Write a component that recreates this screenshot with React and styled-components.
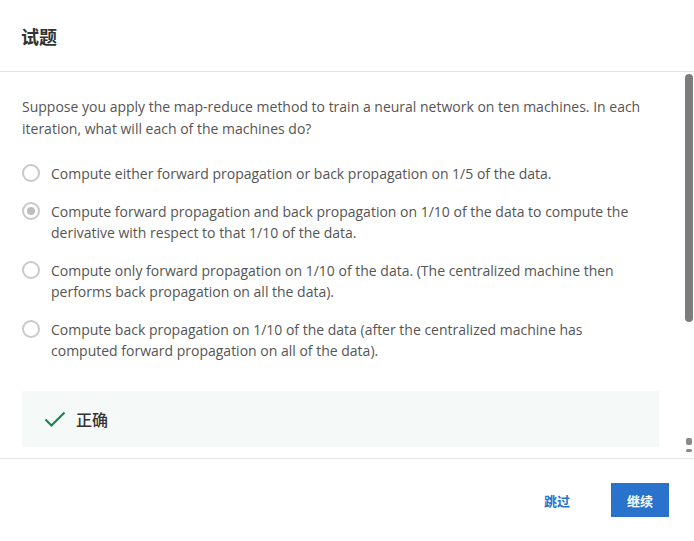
import React from "react";
import styled, { createGlobalStyle } from "styled-components";

const GlobalStyle = createGlobalStyle`
  html, body {
    margin: 0;
    padding: 0;
    background: #fff;
  }
  body {
    font-family: "Open Sans", "Noto Sans CJK SC", sans-serif;
  }
`;

const Dialog = styled.div`
  width: 694px;
  height: 541px;
  display: flex;
  flex-direction: column;
  background: #fff;
  overflow: hidden;
`;

const Header = styled.header`
  height: 71px;
  flex: none;
  display: flex;
  align-items: center;
  padding: 0 21px;
  border-bottom: 1px solid #e3e3e3;
`;

const Title = styled.h2`
  margin: 0;
  font-family: "Noto Sans CJK SC", sans-serif;
  font-size: 18px;
  font-weight: 700;
  color: #333;
`;

const BodyWrap = styled.div`
  flex: 1;
  position: relative;
  min-height: 0;
`;

const Body = styled.div`
  height: 100%;
  box-sizing: border-box;
  overflow-y: scroll;
  padding: 24px 35px 226px 22px;
  scrollbar-width: none;
  &::-webkit-scrollbar {
    display: none;
  }
`;

const ScrollThumb = styled.div`
  position: absolute;
  right: 1px;
  top: 2px;
  width: 8px;
  height: 248px;
  border-radius: 4px;
  background: #7d7d7d;
`;

const ScrollArrow = styled.div`
  position: absolute;
  right: 2px;
  top: ${(p) => p.$top}px;
  width: 6px;
  height: ${(p) => p.$h}px;
  border-radius: 2px;
  background: #8a8a8a;
`;

const Question = styled.p`
  margin: 0 0 23px;
  font-size: 14px;
  line-height: 22px;
  color: #555;
`;

const Options = styled.ul`
  list-style: none;
  margin: 0;
  padding: 0 10px 0 0;
  display: flex;
  flex-direction: column;
  gap: 17px;
`;

const Option = styled.li`
  display: flex;
  align-items: flex-start;
  gap: 11px;
  font-size: 14px;
  line-height: 21px;
  color: #555;
`;

const Radio = styled.span`
  flex: none;
  width: 18px;
  height: 18px;
  margin-top: 1px;
  box-sizing: border-box;
  border: 2px solid #c9c9c9;
  border-radius: 50%;
  display: flex;
  align-items: center;
  justify-content: center;

  &::after {
    content: "";
    width: 8px;
    height: 8px;
    border-radius: 50%;
    background: ${(p) => (p.$checked ? "#bdbdbd" : "transparent")};
  }
`;

const Feedback = styled.div`
  margin-top: 30px;
  height: 56px;
  background: #f5f9f8;
  display: flex;
  align-items: center;
  gap: 10px;
  padding-left: 22px;
`;

const FeedbackText = styled.span`
  font-family: "Noto Sans CJK SC", sans-serif;
  font-size: 16px;
  font-weight: 500;
  color: #333;
`;

const Footer = styled.footer`
  height: 82px;
  flex: none;
  border-top: 1px solid #e3e3e3;
  display: flex;
  align-items: center;
  justify-content: flex-end;
  gap: 25px;
  padding: 0 25px 0 0;
`;

const Button = styled.button`
  height: 34px;
  padding: 0 16px;
  border: none;
  font-family: "Noto Sans CJK SC", sans-serif;
  font-size: 13px;
  font-weight: 700;
  cursor: pointer;
  background: ${(p) => (p.$primary ? "#2a73cc" : "transparent")};
  color: ${(p) => (p.$primary ? "#fff" : "#2a73cc")};
`;

const options = [
  { text: "Compute either forward propagation or back propagation on 1/5 of the data." },
  {
    text: "Compute forward propagation and back propagation on 1/10 of the data to compute the derivative with respect to that 1/10 of the data.",
    checked: true,
  },
  {
    text: "Compute only forward propagation on 1/10 of the data. (The centralized machine then performs back propagation on all the data).",
  },
  {
    text: "Compute back propagation on 1/10 of the data (after the centralized machine has computed forward propagation on all of the data).",
  },
];

function CheckIcon() {
  return (
    <svg width="22" height="16" viewBox="0 0 22 16" fill="none">
      <path d="M1.5 8.5 L7.5 14.5 L20.5 1.5" stroke="#1f8354" strokeWidth="2.2" />
    </svg>
  );
}

export default function App() {
  return (
    <>
      <GlobalStyle />
      <Dialog>
        <Header>
          <Title>试题</Title>
        </Header>
        <BodyWrap>
          <Body>
            <Question>
              Suppose you apply the map-reduce method to train a neural network on ten machines. In each
              iteration, what will each of the machines do?
            </Question>
            <Options>
              {options.map((o, i) => (
                <Option key={i}>
                  <Radio $checked={o.checked} />
                  <span>{o.text}</span>
                </Option>
              ))}
            </Options>
            <Feedback>
              <CheckIcon />
              <FeedbackText>正确</FeedbackText>
            </Feedback>
          </Body>
          <ScrollThumb />
          <ScrollArrow $top={366} $h={7} />
          <ScrollArrow $top={377} $h={3} />
        </BodyWrap>
        <Footer>
          <Button>跳过</Button>
          <Button $primary>继续</Button>
        </Footer>
      </Dialog>
    </>
  );
}
